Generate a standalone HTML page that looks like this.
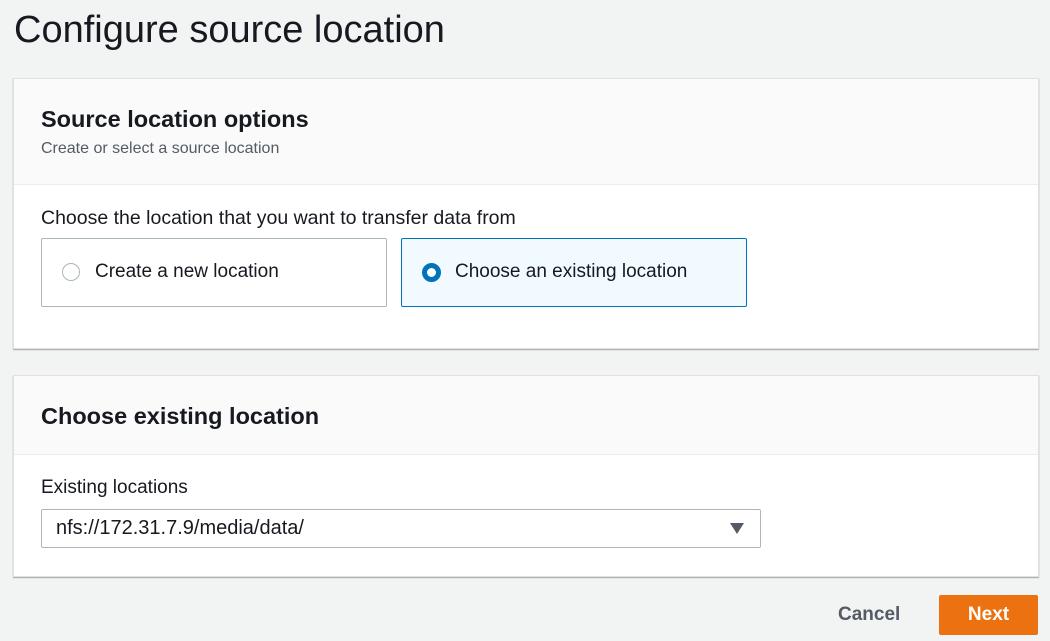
<!DOCTYPE html>
<html><head><style>
body{margin:0;width:1050px;height:641px;background:#f2f3f3;font-family:"Liberation Sans",sans-serif;color:#16191f;position:relative;overflow:hidden}
.a{position:absolute}
.panel{position:absolute;left:13px;width:1024px;background:#fff;border:1px solid #e0e0e0;box-shadow:0 1px 1px rgba(0,28,36,.35)}
.hd{background:#fafafa;border-bottom:1px solid #eaeded}
.radio{position:absolute;width:344px;height:67px;border:1px solid #aab7b8;border-radius:2px;background:#fff}
.radio span{position:absolute;left:53px;top:22px;font-size:19px}
.dot{position:absolute;left:20px;top:24px;width:16px;height:16px;border:1.5px solid #aab7b8;border-radius:50%;background:#fff}
</style></head><body>
<div class="a" style="left:14px;top:9px;font-size:38px;color:#16191f">Configure source location</div>
<div class="panel" style="top:78px;height:269px">
  <div class="hd" style="height:105px;position:relative">
    <div class="a" style="left:27px;top:27px;font-size:23.5px;font-weight:bold">Source location options</div>
    <div class="a" style="left:27px;top:61px;font-size:16px;color:#545b64">Create or select a source location</div>
  </div>
  <div class="a" style="left:27px;top:128px;font-size:19.5px">Choose the location that you want to transfer data from</div>
  <div class="radio" style="left:27px;top:159px"><div class="dot"></div><span>Create a new location</span></div>
  <div class="radio" style="left:387px;top:159px;border-color:#0073bb;background:#f1faff"><div class="dot" style="border:5px solid #0073bb;width:9px;height:9px;background:#fff"></div><span>Choose an existing location</span></div>
</div>
<div class="panel" style="top:375px;height:200px">
  <div class="hd" style="height:78px;position:relative">
    <div class="a" style="left:27px;top:27px;font-size:23.5px;font-weight:bold">Choose existing location</div>
  </div>
  <div class="a" style="left:27px;top:101px;font-size:19px">Existing locations</div>
  <div class="a" style="left:27px;top:133px;width:718px;height:37px;border:1px solid #aab7b8;border-radius:2px">
    <div class="a" style="left:14px;top:7px;font-size:20px">nfs://172.31.7.9/media/data/</div>
    <div class="a" style="right:16px;top:13px;width:0;height:0;border-left:7px solid transparent;border-right:7px solid transparent;border-top:11px solid #545b64"></div>
  </div>
</div>
<div class="a" style="left:838px;top:604px;font-size:19px;font-weight:bold;color:#545b64">Cancel</div>
<div class="a" style="left:939px;top:595px;width:99px;height:40px;background:#ec7211;border-radius:2px;color:#fff;font-size:19px;font-weight:bold;text-align:center;line-height:40px">Next</div>
</body></html>
